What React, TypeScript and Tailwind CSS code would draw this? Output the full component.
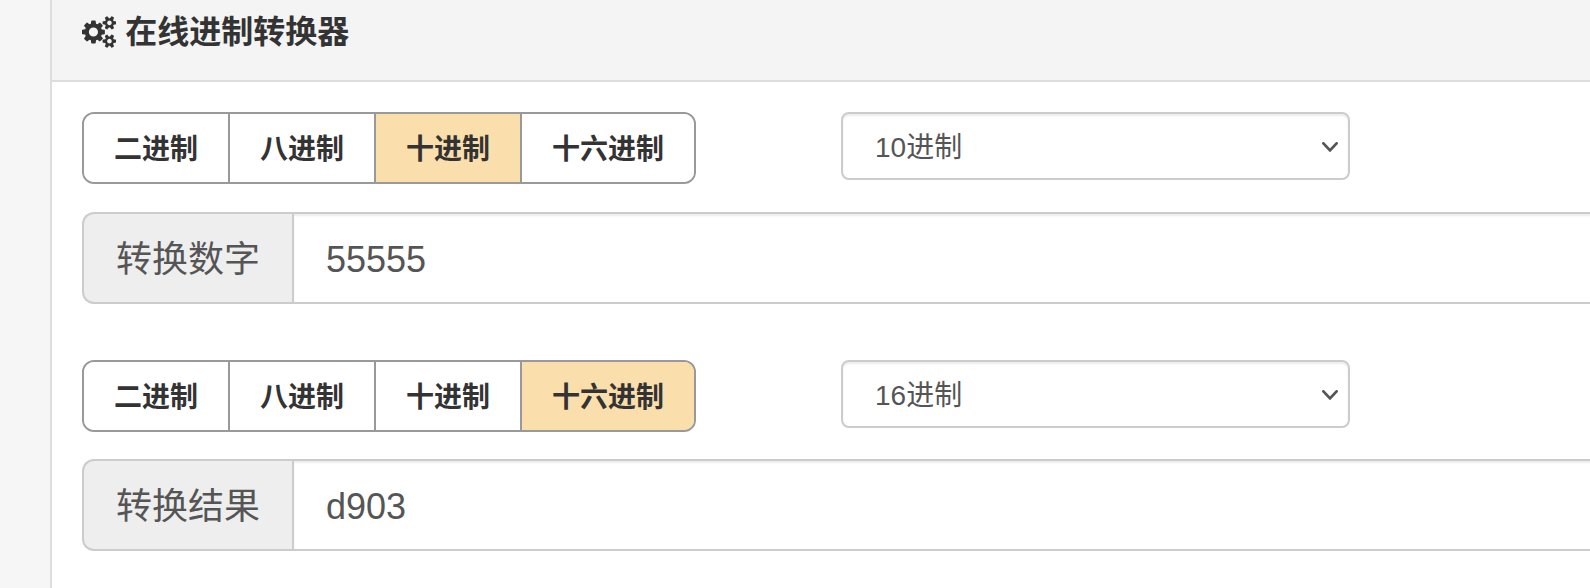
import React, { useState } from 'react';

const bases = [
  { value: 2, label: '二进制' },
  { value: 8, label: '八进制' },
  { value: 10, label: '十进制' },
  { value: 16, label: '十六进制' },
];

const CogsIcon = () => (
  <svg viewBox="0 0 1920 1792" className="mt-px w-[34.3px] h-8 shrink-0" fill="currentColor">
    <path d="M896 896q0-106-75-181t-181-75-181 75-75 181 75 181 181 75 181-75 75-181zm768 512q0-52-38-90t-90-38-90 38-38 90q0 53 37.5 90.5t90.5 37.5 90.5-37.5 37.5-90.5zm0-1024q0-52-38-90t-90-38-90 38-38 90q0 53 37.5 90.5t90.5 37.5 90.5-37.5 37.5-90.5zm-384 421v185q0 10-7 19.5t-16 10.5l-155 24q-11 35-32 76 34 48 90 115 7 11 7 20 0 12-7 19-23 30-82.5 89.5t-78.5 59.5q-11 0-21-7l-115-90q-37 19-77 31-11 108-23 155-7 24-30 24h-186q-11 0-20-7.5t-10-17.5l-23-153q-34-10-75-31l-118 89q-7 7-20 7-11 0-21-8-144-133-144-160 0-9 7-19 10-14 41-53t47-61q-23-44-35-82l-152-24q-10-1-17-9.5t-7-19.5v-185q0-10 7-19.5t16-10.5l155-24q11-35 32-76-34-48-90-115-7-11-7-20 0-12 7-20 22-30 82-89t79-59q11 0 21 7l115 90q34-18 77-32 11-108 23-154 7-24 30-24h186q11 0 20 7.5t10 17.5l23 153q34 10 75 31l118-89q8-7 20-7 11 0 21 8 144 133 144 160 0 8-7 19-12 16-42 54t-45 60q23 48 34 82l152 23q10 2 17 10.5t7 19.5zm640 533v140q0 16-149 31-12 27-30 52 51 113 51 138 0 4-4 7-122 71-124 71-8 0-46-47t-52-68q-20 2-30 2t-30-2q-14 21-52 68t-46 47q-2 0-124-71-4-3-4-7 0-25 51-138-18-25-30-52-149-15-149-31v-140q0-16 149-31 13-29 30-52-51-113-51-138 0-4 4-7 4-2 35-20t59-34 30-16q8 0 46 46.5t52 67.5q20-2 30-2t30 2q51-71 92-112l6-2q4 0 124 70 4 3 4 7 0 25-51 138 17 23 30 52 149 15 149 31zm0-1024v140q0 16-149 31-12 27-30 52 51 113 51 138 0 4-4 7-122 71-124 71-8 0-46-47t-52-68q-20 2-30 2t-30-2q-14 21-52 68t-46 47q-2 0-124-71-4-3-4-7 0-25 51-138-18-25-30-52-149-15-149-31v-140q0-16 149-31 13-29 30-52-51-113-51-138 0-4 4-7 4-2 35-20t59-34 30-16q8 0 46 46.5t52 67.5q20-2 30-2t30 2q51-71 92-112l6-2q4 0 124 70 4 3 4 7 0 25-51 138 17 23 30 52 149 15 149 31z" />
  </svg>
);

type PickerProps = {
  value: number;
  onChange: (value: number) => void;
  buttonPadding: string;
};

const BasePicker = ({ value, onChange, buttonPadding }: PickerProps) => (
  <div className="flex items-start">
    {/* Quick buttons */}
    <div className="flex h-[72px] w-[614px] rounded-xl border-2 border-[#999] overflow-hidden bg-white">
      {bases.map((base) => (
        <button
          key={base.value}
          onClick={() => onChange(base.value)}
          className={`px-[30px] border-r-2 border-[#999] last:border-r-0 text-[28px] leading-[40px] h-[68px] font-bold text-[#333] whitespace-nowrap ${buttonPadding} ${
            value === base.value ? 'bg-[#fadfad]' : 'bg-white'
          }`}
        >
          {base.label}
        </button>
      ))}
    </div>

    {/* Full list */}
    <div className="ml-[145px] flex items-center justify-between w-[509px] h-[68px] pl-8 pr-[10px] rounded-lg border-2 border-[#ccc] bg-white shadow-[inset_0_2px_2px_rgba(0,0,0,0.075)] text-[28px] leading-[40px] text-[#555]">
      <span className="pt-1">{value}进制</span>
      <svg viewBox="0 0 16 10" className="mt-[2px] w-4 h-[10px]" fill="none" stroke="currentColor" strokeWidth="2.8" strokeLinecap="round" strokeLinejoin="round">
        <path d="M1.4 1.4L8 8.4l6.6-7" />
      </svg>
    </div>
  </div>
);

const NumberField = ({ label, value }: { label: string; value: string }) => (
  <div className="flex h-[92px] -mr-2 text-4xl text-[#555]">
    <span className="flex items-center px-8 pt-1 rounded-l-xl border-2 border-r-0 border-[#ccc] bg-[#eee] whitespace-nowrap">
      {label}
    </span>
    <div className="flex-1 flex items-center px-8 pt-[3px] border-2 border-[#ccc] bg-white shadow-[inset_0_2px_2px_rgba(0,0,0,0.075)]">
      {value}
    </div>
  </div>
);

const App = () => {
  const [from, setFrom] = useState(10);
  const [to, setTo] = useState(16);

  const source = '55555';
  const result = parseInt(source, from).toString(to);

  return (
    <div className="h-[588px] overflow-hidden bg-[#f6f6f6] pl-[50px] font-['Liberation_Sans','Noto_Sans_CJK_SC',sans-serif]">
      <div className="h-full border-l-2 border-[#ddd] bg-white">
        {/* Panel heading */}
        <div className="flex items-start h-[82px] pl-[30px] pt-[15px] border-b-2 border-[#ddd] bg-[#f4f4f4] text-[#333]">
          <CogsIcon />
          <h3 className="ml-[9px] text-[32px] leading-[35px] font-bold">在线进制转换器</h3>
        </div>

        {/* Panel body */}
        <div className="pl-[30px] pt-[30px]">
          <BasePicker value={from} onChange={setFrom} buttonPadding="pt-[4px]" />
          <div className="mt-7">
            <NumberField label="转换数字" value={source} />
          </div>

          <div className="mt-14">
            <BasePicker value={to} onChange={setTo} buttonPadding="pt-[3px]" />
          </div>
          <div className="mt-[27px]">
            <NumberField label="转换结果" value={result} />
          </div>
        </div>
      </div>
    </div>
  );
};

export default App;
